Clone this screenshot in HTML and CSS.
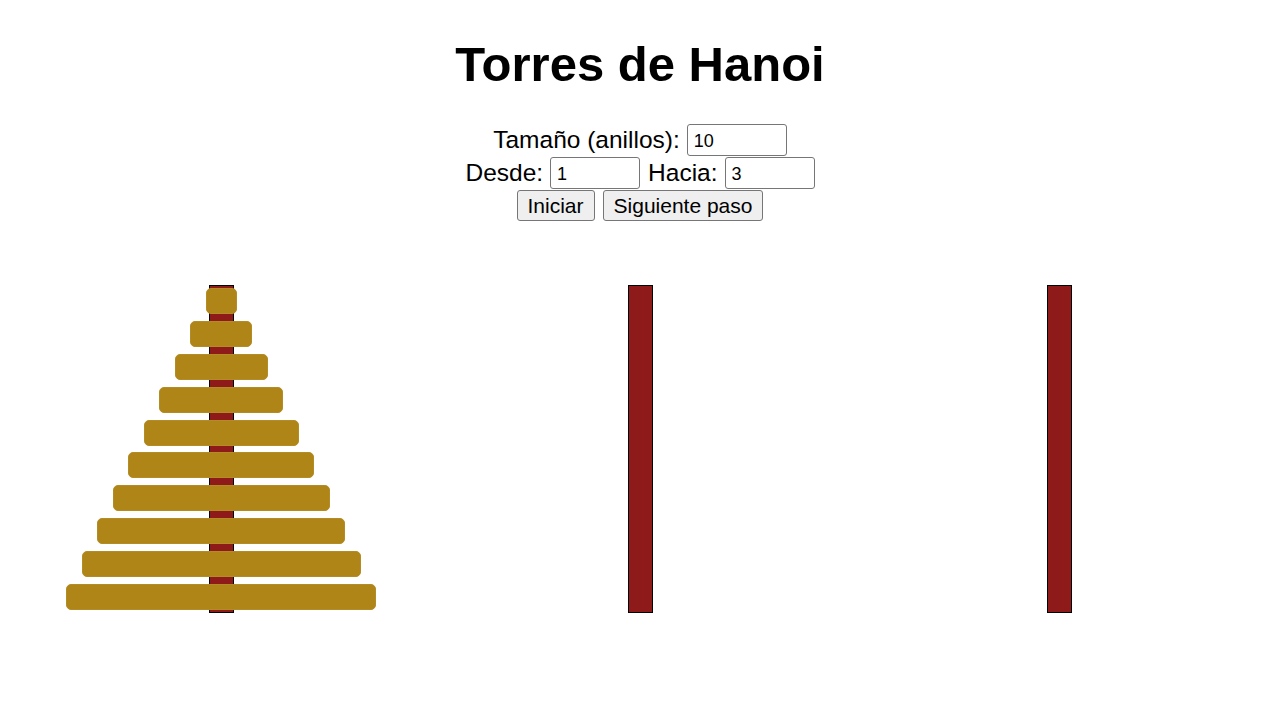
FILE: index.html
```html
<!DOCTYPE html>
<html lang="es">
<head>
<meta charset="utf-8">
<title>Torres de Hanoi</title>
<link rel="stylesheet" href="styles.css">
</head>
<body>
<div class="page">
  <h1 class="title">Torres de Hanoi</h1>
  <div class="controls">
    <div class="row">
      <label class="lbl" for="size">Tamaño (anillos):</label>
      <input class="field field-wide" id="size" type="text" value="10">
    </div>
    <div class="row">
      <label class="lbl" for="from">Desde:</label>
      <input class="field" id="from" type="text" value="1">
      <label class="lbl lbl-gap" for="to">Hacia:</label>
      <input class="field" id="to" type="text" value="3">
    </div>
    <div class="row row-btns">
      <button class="btn" type="button">Iniciar</button>
      <button class="btn" type="button">Siguiente paso</button>
    </div>
  </div>
  <div class="towers">
    <div class="tower">
      <div class="rod"></div>
      <div class="stack">
        <div class="disk" style="width:31px"></div>
        <div class="disk" style="width:62px"></div>
        <div class="disk" style="width:93px"></div>
        <div class="disk" style="width:124px"></div>
        <div class="disk" style="width:155px"></div>
        <div class="disk" style="width:186px"></div>
        <div class="disk" style="width:217px"></div>
        <div class="disk" style="width:248px"></div>
        <div class="disk" style="width:279px"></div>
        <div class="disk" style="width:310px"></div>
      </div>
    </div>
    <div class="tower">
      <div class="rod"></div>
      <div class="stack"></div>
    </div>
    <div class="tower">
      <div class="rod"></div>
      <div class="stack"></div>
    </div>
  </div>
</div>
</body>
</html>
```
FILE: styles.css
```css
html, body {
  margin: 0;
  padding: 0;
  background: #ffffff;
}

body {
  font-family: "Liberation Sans", Arial, sans-serif;
  font-size: 24px;
  color: #000000;
}

.page {
  padding-top: 36px;
}

.title {
  margin: 0;
  font-size: 49px;
  line-height: 56px;
  font-weight: bold;
  text-align: center;
}

.controls {
  margin-top: 31px;
  display: flex;
  flex-direction: column;
  align-items: center;
}

.row {
  height: 33px;
  display: flex;
  align-items: center;
  justify-content: center;
}

.lbl {
  font-size: 24.5px;
  margin-right: 7px;
}

.lbl-gap {
  margin-left: 8px;
}

.field {
  box-sizing: border-box;
  width: 90px;
  height: 32px;
  padding: 4px 6px 0;
  border: 1px solid #767676;
  border-radius: 3px;
  font-family: "Liberation Sans", Arial, sans-serif;
  font-size: 18px;
  color: #000000;
  background: #ffffff;
}

.field-wide {
  width: 100px;
}

.row-btns {
  gap: 8px;
}

.btn {
  box-sizing: border-box;
  height: 31px;
  padding: 1px 10px;
  border: 1px solid #767676;
  border-radius: 3px;
  background: #efefef;
  font-family: "Liberation Sans", Arial, sans-serif;
  font-size: 21px;
  color: #000000;
}

.towers {
  margin-top: 63px;
  display: flex;
  justify-content: center;
}

.tower {
  width: 419px;
  height: 328px;
  display: grid;
  justify-items: center;
}

.rod,
.stack {
  grid-area: 1 / 1;
}

.rod {
  box-sizing: border-box;
  width: 25px;
  height: 328px;
  background: #8e1a1a;
  border: 1px solid #000000;
}

.stack {
  width: 100%;
  height: 328px;
  display: flex;
  flex-direction: column;
  justify-content: space-around;
  align-items: center;
}

.disk {
  box-sizing: border-box;
  height: 26px;
  background: #ae8516;
  border: 1px solid #b48c26;
  border-radius: 5px;
}
```
